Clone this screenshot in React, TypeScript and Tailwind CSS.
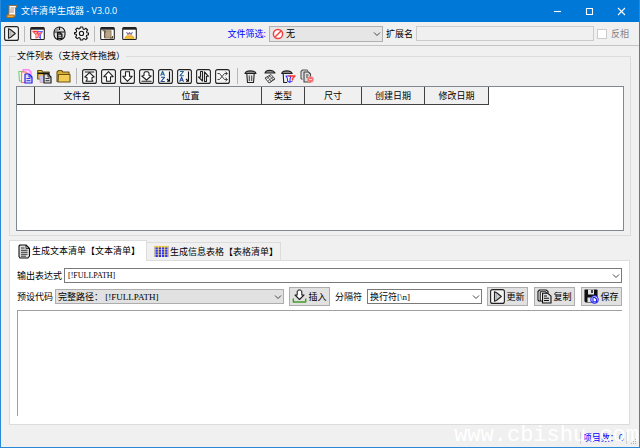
import type { ReactNode } from 'react';

interface IconProps {
  children: ReactNode;
}

function Icon({ children }: IconProps) {
  return (
    <svg
      viewBox="0 0 15 15"
      className="size-[15px] shrink-0"
      fill="none"
      stroke="#111"
      strokeWidth="1.1"
      strokeLinejoin="round"
      aria-hidden="true"
    >
      {children}
    </svg>
  );
}

function Frame() {
  return <rect x="0.6" y="0.6" width="13.8" height="13.8" rx="2" fill="#f4f4f4" stroke="#222" strokeWidth="1.1" />;
}

function WindowFrame() {
  return (
    <>
      <rect x="0.7" y="1.5" width="13.6" height="12" rx="1" fill="#fff" stroke="#222" />
      <path d="M1 2.7h13" stroke="#222" strokeWidth="2" />
    </>
  );
}

const PlayIcon = () => (
  <Icon>
    <Frame />
    <path d="M4.500 2.800v9.400l2.200-1 4.600-3.700-4.600-3.700z" fill="#ccc" stroke="#222" />
    <path d="M6.500 5v5" stroke="#aaa" strokeWidth="0.8" />
  </Icon>
);

const FilterWindowIcon = () => (
  <Icon>
    <WindowFrame />
    <path d="M2.500 5.500h6l-2 2.500" stroke="#f33" strokeWidth="1.300" />
    <path d="M7 5.500h5.500l-2 3v4l-1.500-1.500v-2" stroke="#66f" />
    <path d="M3.500 6l2.500 2.500v3.500l2-1V8l3-1.500M8 9.500l2.500-2" stroke="#f55" />
  </Icon>
);

const MouseIcon = () => (
  <Icon>
    <rect x="2" y="1" width="11" height="13" rx="5.500" fill="#ddd" />
    <path d="M2.500 6h10M7.500 1v3" />
    <path d="M3.500 2.500h3v3h-3.500z" fill="#999" stroke="none" />
    <path d="M5.500 6.500h2.500l2 2v4h-4.500z" fill="#555" />
    <path d="M6.500 9.500h2.500M6.500 11.300h3" stroke="#ddd" strokeWidth="0.8" />
  </Icon>
);

const GearIcon = () => (
  <Icon>
    <path
      d="M6.300 1h2.400l.4 1.900 1.200.5L12 2.300l1.600 1.700-1.100 1.600.4 1.100 1.600.3v1.800l-1.800.5-.4 1.100 1 1.600-1.500 1.600-1.600-1-1.200.5L8.600 14H6.400L6 12.100l-1.200-.5-1.600 1L1.600 11l1-1.600-.4-1.100L.5 7.900V6.600l1.800-.4.4-1.200-1-1.600L3.300 2l1.600 1L6 2.600z"
      fill="#f4f4f4"
    />
    <circle cx="7.500" cy="7.400" r="2.100" />
  </Icon>
);

const ScrollWindowIcon = () => (
  <Icon>
    <WindowFrame />
    <path d="M5 4.800h6v7.200H5z" fill="#b9a58b" stroke="#998566" />
    <path d="M2.500 4.800h2.500v2.200M10 12h2.500v-2" stroke="#5b4932" />
    <path d="M4.500 5v7" stroke="#6b5942" />
  </Icon>
);

const ImageWindowIcon = () => (
  <Icon>
    <WindowFrame />
    <path d="M4.500 6l1.500 2.500 1.500-2 1.500 2L10.500 6" stroke="#77a" />
    <path d="M3 12.200l1.500-2h6l1.500 2z" fill="#fc3" stroke="#da2" />
    <path d="M5 9h5" stroke="#f84" />
  </Icon>
);

function PageShape({ color, fill }: { color: string; fill: string }) {
  return (
    <>
      <path d="M7 5h4l3 3v6H7z" fill={fill} stroke={color} strokeWidth="1.200" />
      <path d="M11 5v3h3M8.500 9.500h4M8.500 11.700h4" stroke={color} strokeWidth="0.9" />
    </>
  );
}

const AddFilesIcon = () => (
  <Icon>
    <path d="M5 .8h6l2 2v7H5z" fill="#fcf" stroke="#f6e" />
    <path d="M.8 2.500h4.500l1 1v8.500H1.500z" fill="#efe" stroke="#7c7" />
    <path d="M3.500 3h4l2 2v8.500h-6z" fill="#fed" stroke="#f76" />
    <PageShape color="#22e" fill="#dde" />
  </Icon>
);

const AddFolderFilesIcon = () => (
  <Icon>
    <path d="M.7 1.500h4l1 1.500h6.500v7H.7z" fill="#e8c44a" stroke="#654d10" />
    <path d="M.7 4.300h11.500" strokeWidth="1.600" />
    <path d="M3 13.500V9H1.700L4.500 5.500 6.500 8v5.500z" fill="#bcf" stroke="#e99" strokeWidth="0.800" />
    <PageShape color="#222" fill="#ddd" />
  </Icon>
);

const FolderIcon = () => (
  <Icon>
    <path d="M1 3l1.500-1.500h3L7 3h6v9.500H1z" fill="#d9ac35" stroke="#6b5518" />
    <path d="M2.500 5.500h11.500v7.500H2z" fill="#f2cb55" stroke="#6b5518" />
  </Icon>
);

const MoveTopIcon = () => (
  <Icon>
    <Frame />
    <path d="M2.800 3h9.400M7.500 3.700l4.700 4.300-2.200.5v2.500l1 1.200H4l1-1.200V8.500L2.800 8z" fill="#fff" stroke="#222" />
  </Icon>
);

const MoveUpIcon = () => (
  <Icon>
    <Frame />
    <path d="M7.500 2.700l4.700 5H9.500v4.500h-4V7.700H2.800z" fill="#fff" stroke="#222" />
  </Icon>
);

const MoveDownIcon = () => (
  <Icon>
    <Frame />
    <path d="M7.500 12.300l4.700-5H9.500V2.800h-4v4.500H2.800z" fill="#fff" stroke="#222" />
  </Icon>
);

const MoveBottomIcon = () => (
  <Icon>
    <Frame />
    <path d="M2.500 12.300h10M7.500 11L2.800 7 5 6.500V4l1-1.200h3L10 4v2.500l2.200.5z" fill="#fff" stroke="#222" />
  </Icon>
);

const SortAscIcon = () => (
  <Icon>
    <Frame />
    <path d="M2.700 6.800l1.900-4.600 1.900 4.600M3.400 5.300h2.400" stroke="#24689c" />
    <path d="M3 8.300h3.500L3 12.500h3.800" stroke="#24489c" />
    <path d="M11.500 2.500v9.700L9 10M9 12.200h3" />
  </Icon>
);

const SortDescIcon = () => (
  <Icon>
    <Frame />
    <path d="M3 2.500h3.500L3 6.700h3.800" stroke="#24689c" />
    <path d="M2.700 12.700l1.900-4.600 1.900 4.600M3.400 11.200h2.400" stroke="#24489c" />
    <path d="M11.500 2.500v9.700L9 10M9 12.200h3" />
  </Icon>
);

const ReverseIcon = () => (
  <Icon>
    <Frame />
    <path d="M4.500 2.500H6.500v9.500L2.500 8h2zM8.500 12.500V2.800l4 4.500h-2v5.200z" fill="#eee" stroke="#222" />
  </Icon>
);

const ShuffleIcon = () => (
  <Icon>
    <Frame />
    <path
      d="M2.500 4.500h2l5 6h2.500M2.500 10.500h2l5-6h2.500M10.500 2.800l2 1.700-2 1.700M10.500 8.800l2 1.700-2 1.700"
      stroke="#444"
      strokeWidth="1"
    />
  </Icon>
);

const TrashIcon = () => (
  <Icon>
    <path d="M2 4.500c1-3.500 10-3.500 11 0z" fill="#888" stroke="#222" />
    <path d="M3.800 5l.7 8.500h6L11.200 5" fill="#e4e4e4" stroke="#222" />
    <path d="M6.300 6.500V12M8.700 6.500V12" stroke="#333" strokeWidth="0.9" />
  </Icon>
);

const ShredIcon = () => (
  <Icon>
    <path d="M3 4c1-3.500 8-3.500 10 0z" fill="#999" stroke="#222" />
    <path d="M3 9l6-3.500 4 4.500-6 4z" fill="#eee" stroke="#333" strokeWidth="0.900" />
    <path d="M4.500 10l3.500-3M6 12l5-4M8 13.500l4-3.500M5.500 7.800l4 4.700M7.500 6.500l4 4.700" stroke="#333" strokeWidth="0.700" />
  </Icon>
);

const TrashFilterIcon = () => (
  <Icon>
    <path d="M.7 4.500c1-3.500 9-3.500 10.500 0z" fill="#888" stroke="#222" />
    <path d="M2.200 5l.5 8.500h3.500" stroke="#222" />
    <path d="M5 7h5L9 10v3.500L6.500 12V9.500z" fill="#fff" stroke="#33f" />
    <path d="M7.500 7h6.500l-2.500 2.500v2" stroke="#f33" strokeWidth="1.400" />
    <path d="M6.500 12.500h5" stroke="#55f" />
  </Icon>
);

const RemoveFilesIcon = () => (
  <Icon>
    <path d="M2.500 10.500L1 9.500V2.500L2.500 1h4.500l1 1.500" fill="#ddd" stroke="#555" />
    <path d="M4 3h4.500l2 2v8H4z" fill="#ddd" stroke="#444" />
    <path d="M6 6h2.500M6 8h2" stroke="#444" />
    <circle cx="10.500" cy="10.500" r="2.700" fill="#f66" stroke="#e88" />
    <path d="M9 10.500h3" stroke="#fcc" />
  </Icon>
);

const DocIcon = () => (
  <Icon>
    <path d="M3 1h6l3.500 3.500V12l-1.500 2H3l-1-1.500V2z" fill="#ddd" />
    <path d="M9 1v3.500h3.500M4 4h3.500M4 6.300h6.500M4 8.300h6.500M4 10.300h6.500M4 12.200h5" strokeWidth="0.8" />
  </Icon>
);

const GridIcon = () => (
  <Icon>
    <path d="M.5 2h14v11H.5z" fill="#33d" stroke="none" />
    <path d="M.5 2.700h14" stroke="#e8c33a" strokeWidth="1.600" />
    <path d="M.5 5.500h14M.5 8h14M.5 10.500h14" stroke="#cce" strokeWidth="0.600" />
    <path d="M1 2v11M4.300 2v11M7.500 2v11M10.700 2v11M14 2v11" stroke="#f1dc7c" strokeWidth="1" />
  </Icon>
);

const InsertIcon = () => (
  <Icon>
    <path d="M7.500 10.500l4.500-4.500H9.800V2.500L8.500 1h-2L5.200 2.500V6H3z" fill="#fff" stroke="#222" />
    <path d="M1.300 9.500v3.500h12.400V9.500" stroke="#4a9a2a" strokeWidth="1.500" />
  </Icon>
);

const CopyIcon = () => (
  <Icon>
    <path d="M2.500 12.500L1 11V2.500L2.500 1H9L11 2.500v2" fill="#fff" />
    <path d="M3.200 2.700h5l2 2V12h-7z" fill="#fff" />
    <path d="M5.500 4.200h5L14 7.200V14H5.500z" fill="#ddd" />
    <path d="M7 7h3M7 9.200h5M7 11.500h5" />
  </Icon>
);

const SaveIcon = () => (
  <Icon>
    <path d="M1 1h12v12H2l-1-1z" fill="#111" />
    <path d="M4 .5h6v5H4zM3.500 8.500h5V13h-5z" fill="#e4e4e4" stroke="none" />
    <path d="M8 1v3" strokeWidth="1.500" />
    <circle cx="10.500" cy="10.500" r="3.700" fill="#dde" stroke="#22e" />
    <path d="M9 8.500h1.700L12.500 10v2.700H9z" fill="#fff" stroke="#22e" />
  </Icon>
);

function Separator() {
  return <span className="mx-px h-4 w-px shrink-0 bg-[#b8b8b8]" />;
}

function ToolButton({ label, children }: { label: string; children: ReactNode }) {
  return (
    <button type="button" aria-label={label} className="shrink-0">
      {children}
    </button>
  );
}

interface DropdownProps {
  id: string;
  value: string;
  className: string;
  selectClass: string;
}

function Dropdown({ id, value, className, selectClass }: DropdownProps) {
  return (
    <div className={`relative flex min-w-0 ${className}`}>
      <select id={id} className={`w-full appearance-none border pr-4 outline-none ${selectClass}`}>
        <option>{value}</option>
      </select>
      <svg
        viewBox="0 0 8 6"
        className="pointer-events-none absolute inset-y-0 right-0.5 my-auto h-1.5 w-2"
        fill="none"
        stroke="#444"
        aria-hidden="true"
      >
        <path d="M1 1.500l3 3 3-3" />
      </svg>
    </div>
  );
}

function ActionButton({ label, children }: { label: string; children: ReactNode }) {
  return (
    <button
      type="button"
      className="flex h-[19px] w-[41px] shrink-0 items-center justify-center gap-px border border-[#adadad] bg-[#e1e1e1]"
    >
      {children}
      {label}
    </button>
  );
}

function TitleBar() {
  return (
    <header className="flex h-[22px] items-center bg-[#0078d7] pl-1 text-white">
      <Icon>
        <path d="M4 1.500h8l-1.500 3v7.500H2.500L4 9z" fill="#fff" stroke="#9a7040" />
        <path d="M5.500 4h4M5 6h4M5 8h4" stroke="#a88" />
        <path d="M2 11h7v2.500H2z" fill="#f7b13c" stroke="#a96a20" />
      </Icon>
      <h1 className="ml-px flex-1 font-normal whitespace-pre">文件清单生成器 - V3.0.0</h1>
      <div className="flex gap-[17px] pr-2.5">
        <ToolButton label="最小化">
          <Icon>
            <path d="M4 7.500h7" stroke="#fff" />
          </Icon>
        </ToolButton>
        <ToolButton label="最大化">
          <Icon>
            <path d="M4.500 4.500h6v6h-6z" stroke="#fff" />
          </Icon>
        </ToolButton>
        <ToolButton label="关闭">
          <Icon>
            <path d="M4 4l7 7M11 4l-7 7" stroke="#fff" />
          </Icon>
        </ToolButton>
      </div>
    </header>
  );
}

function MainToolbar() {
  return (
    <div className="flex h-6 items-center border-b border-[#c4c4c4] pr-2.5 pl-[3px]">
      <div className="flex items-center gap-1">
        <ToolButton label="运行"><PlayIcon /></ToolButton>
        <Separator />
        <ToolButton label="筛选"><FilterWindowIcon /></ToolButton>
      </div>
      <div className="ml-[7px] flex items-center gap-[7px]">
        <ToolButton label="鼠标"><MouseIcon /></ToolButton>
        <ToolButton label="设置"><GearIcon /></ToolButton>
      </div>
      <div className="ml-1 flex items-center gap-1">
        <Separator />
        <ToolButton label="日志"><ScrollWindowIcon /></ToolButton>
      </div>
      <div className="ml-[7px] flex">
        <ToolButton label="图像"><ImageWindowIcon /></ToolButton>
      </div>
      <div className="ml-auto flex items-center gap-[3px]">
        <label htmlFor="filter" className="text-[#0000ff]">文件筛选:</label>
        <div className="relative">
          <Dropdown id="filter" value="无" className="w-[114px]" selectClass="h-4 border-[#b0b0b0] bg-[#e6e6e6] pl-4" />
          <svg
            viewBox="0 0 12 12"
            className="pointer-events-none absolute top-0.5 left-[3px] size-3"
            fill="#fff"
            stroke="#f04040"
            strokeWidth="1.500"
            aria-hidden="true"
          >
            <circle cx="6" cy="6" r="4.600" />
            <path d="M3 9l6-6" />
          </svg>
        </div>
        <label htmlFor="ext">扩展名</label>
      </div>
      <input id="ext" disabled className="ml-[3px] h-[15px] w-[178px] min-w-0 border border-[#cccccc] bg-[#f0f0f0]" />
      <label className="ml-[3px] flex items-center gap-1 text-[#838383]">
        <input type="checkbox" disabled className="size-2.5 appearance-none border border-[#cccccc] bg-white" />
        反相
      </label>
    </div>
  );
}

const TH = 'border-r border-b border-[#404040] bg-[#f0f0f0] p-0 font-normal';

function FileList() {
  return (
    <fieldset className="mx-2 mt-1 min-w-0 border border-[#dcdcdc] px-1.5 pb-1">
      <legend className="px-px">文件列表（支持文件拖拽）</legend>
      <div className="mt-1 flex h-5 items-center gap-1 pl-0.5">
        <ToolButton label="添加文件"><AddFilesIcon /></ToolButton>
        <ToolButton label="添加目录文件"><AddFolderFilesIcon /></ToolButton>
        <ToolButton label="添加目录"><FolderIcon /></ToolButton>
        <Separator />
        <ToolButton label="置顶"><MoveTopIcon /></ToolButton>
        <ToolButton label="上移"><MoveUpIcon /></ToolButton>
        <ToolButton label="下移"><MoveDownIcon /></ToolButton>
        <ToolButton label="置底"><MoveBottomIcon /></ToolButton>
        <ToolButton label="升序"><SortAscIcon /></ToolButton>
        <ToolButton label="降序"><SortDescIcon /></ToolButton>
        <ToolButton label="反转"><ReverseIcon /></ToolButton>
        <ToolButton label="乱序"><ShuffleIcon /></ToolButton>
        <div className="ml-0.5 flex items-center gap-1">
          <Separator />
          <ToolButton label="清空"><TrashIcon /></ToolButton>
          <ToolButton label="粉碎"><ShredIcon /></ToolButton>
          <ToolButton label="清除筛选"><TrashFilterIcon /></ToolButton>
          <ToolButton label="移除文件"><RemoveFilesIcon /></ToolButton>
        </div>
      </div>
      <div className="h-[145px] border border-[#828790] bg-white">
        <table className="w-[472px] table-fixed border-separate border-spacing-0">
          <thead>
            <tr className="h-[18px]">
              <th className={`w-[18px] ${TH}`} />
              <th className={`w-[85px] ${TH}`}>文件名</th>
              <th className={`w-[142px] ${TH}`}>位置</th>
              <th className={`w-[43px] ${TH}`}>类型</th>
              <th className={`w-[57px] ${TH}`}>尺寸</th>
              <th className={`w-[63px] ${TH}`}>创建日期</th>
              <th className={`w-[64px] ${TH}`}>修改日期</th>
            </tr>
          </thead>
          <tbody />
        </table>
      </div>
    </fieldset>
  );
}

function OutputPanel() {
  return (
    <section className="mt-1 mr-[9px] ml-2 flex flex-1 flex-col">
      <div role="tablist" className="flex items-end">
        <button
          type="button"
          role="tab"
          aria-selected="true"
          className="z-10 -mb-px flex h-[21px] w-[138px] items-center border border-b-0 border-[#dcdcdc] bg-white pl-[7px]"
        >
          <DocIcon />
          生成文本清单【文本清单】
        </button>
        <button
          type="button"
          role="tab"
          aria-selected="false"
          className="flex h-[18px] w-[134px] items-center gap-px border border-b-0 border-l-0 border-[#dcdcdc] bg-[#f0f0f0] pl-[7px]"
        >
          <GridIcon />
          生成信息表格【表格清单】
        </button>
      </div>
      <div className="flex flex-1 flex-col gap-1 border border-[#dcdcdc] bg-white px-[7px] pt-[7px] pb-2">
        <div className="flex items-center gap-0.5">
          <label htmlFor="expr">输出表达式</label>
          <Dropdown
            id="expr"
            value="[!FULLPATH]"
            className="flex-1"
            selectClass="h-[15px] border-[#7a7a7a] bg-white pl-[3px] font-['Liberation_Serif','Noto_Sans_CJK_SC',serif] text-[8px]"
          />
        </div>
        <div className="flex items-center gap-[5px]">
          <div className="flex min-w-0 flex-1 items-center gap-0.5">
            <label htmlFor="preset" className="shrink-0">预设代码</label>
            <Dropdown
              id="preset"
              value="完整路径： [!FULLPATH]"
              className="flex-1"
              selectClass="h-[15px] border-[#adadad] bg-[#e1e1e1] pl-0.5 font-['Liberation_Serif','Noto_Sans_CJK_SC',serif]"
            />
          </div>
          <ActionButton label="插入"><InsertIcon /></ActionButton>
          <label htmlFor="separator" className="shrink-0">分隔符</label>
          <Dropdown
            id="separator"
            value="换行符[\n]"
            className="w-[115px]"
            selectClass="h-[15px] border-[#7a7a7a] bg-white pl-0.5 font-['Liberation_Serif','Noto_Sans_CJK_SC',serif]"
          />
          <div className="flex gap-1.5">
            <ActionButton label="更新"><PlayIcon /></ActionButton>
            <ActionButton label="复制"><CopyIcon /></ActionButton>
            <ActionButton label="保存"><SaveIcon /></ActionButton>
          </div>
        </div>
        <textarea
          aria-label="输出"
          className="w-full flex-1 resize-none border-t border-l border-[#a0a0a0] outline-none"
        />
      </div>
    </section>
  );
}

function StatusBar() {
  return (
    <footer className="relative flex h-[22px] items-end justify-end pb-[3px]">
      <span className="mr-3 flex h-3 items-center border-x border-[#d0d0d0] px-0.5 text-[#0000ff]">项目数：0</span>
      <svg viewBox="0 0 6 6" className="absolute right-0.5 bottom-0.5 size-1.5" fill="#b0b0b0" aria-hidden="true">
        <path d="M4 0h1v1H4zM2 2h1v1H2zM4 2h1v1H4zM0 4h1v1H0zM2 4h1v1H2zM4 4h1v1H4z" />
      </svg>
      <span className="pointer-events-none absolute right-0 bottom-0 font-['Liberation_Mono',monospace] text-[22px] leading-[22px] text-white">
        www.cbishu.com
      </span>
    </footer>
  );
}

export default function App() {
  return (
    <main
      lang="zh-CN"
      className="flex min-h-screen flex-col border-x border-b border-[#2b88d8] bg-[#f0f0f0] font-['Open_Sans','Noto_Sans_CJK_SC',sans-serif] text-[9px] leading-3 text-black"
    >
      <TitleBar />
      <MainToolbar />
      <FileList />
      <OutputPanel />
      <StatusBar />
    </main>
  );
}
